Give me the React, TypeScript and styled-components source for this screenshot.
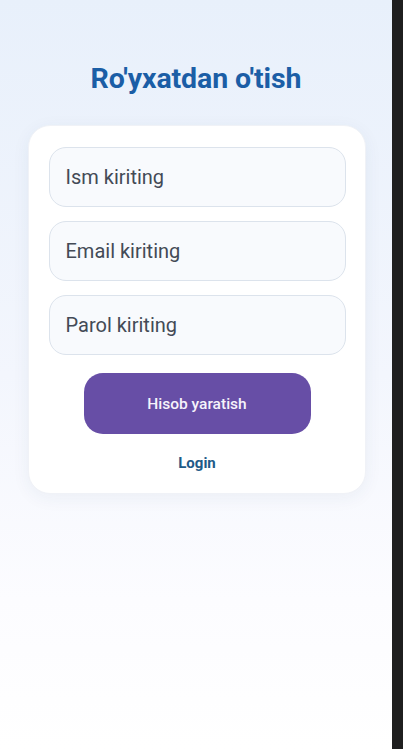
import React from "react";
import styled, { createGlobalStyle } from "styled-components";

const GlobalStyle = createGlobalStyle`
  html, body {
    margin: 0;
    padding: 0;
    height: 100%;
  }
  body {
    font-family: Roboto, "Liberation Sans", Arial, sans-serif;
    background: #ffffff;
  }
  #root {
    height: 100%;
  }
`;

const App = () => {
  return (
    <>
      <GlobalStyle />
      <Screen>
        <Page>
          <Title>Ro'yxatdan o'tish</Title>
          <Card>
            <Field placeholder="Ism kiriting" />
            <Field placeholder="Email kiriting" />
            <Field placeholder="Parol kiriting" type="password" />
            <SubmitButton type="button">Hisob yaratish</SubmitButton>
            <LoginLink href="#">Login</LoginLink>
          </Card>
        </Page>
        <SideStrip />
      </Screen>
    </>
  );
};

const Screen = styled.div`
  display: flex;
  width: 403px;
  height: 749px;
  overflow: hidden;
`;

const Page = styled.main`
  flex: 1;
  display: flex;
  flex-direction: column;
  align-items: center;
  padding-top: 62px;
  background: linear-gradient(180deg, #e8f0fb 0%, #f3f6fd 50%, #fcfcff 80%, #ffffff 100%);
`;

const SideStrip = styled.div`
  width: 11px;
  background: #1f1f1f;
`;

const Title = styled.h1`
  margin: 0 0 30px;
  font-size: 28.5px;
  line-height: 33px;
  font-weight: 700;
  color: #1b5ea6;
  letter-spacing: -0.1px;
`;

const Card = styled.section`
  box-sizing: border-box;
  width: 338px;
  margin-left: 2px;
  padding: 21px 20px 20px;
  display: flex;
  flex-direction: column;
  align-items: center;
  gap: 14px;
  background: #ffffff;
  border: 1px solid #f0f2f7;
  border-radius: 22px;
  box-shadow: 0 4px 18px rgba(40, 60, 110, 0.06);
`;

const Field = styled.input`
  box-sizing: border-box;
  width: 297px;
  height: 60px;
  padding: 0 16px;
  font-family: inherit;
  font-size: 20px;
  color: #3f4652;
  background: #f8fafd;
  border: 1px solid #dce3ec;
  border-radius: 17px;
  outline: none;

  &::placeholder {
    color: #434a56;
    opacity: 1;
  }
`;

const SubmitButton = styled.button`
  width: 227px;
  height: 61px;
  margin-top: 4px;
  border: none;
  border-radius: 19px;
  background: #674ea6;
  color: #f6f3fb;
  font-family: inherit;
  font-size: 15.5px;
  font-weight: 500;
  cursor: pointer;
`;

const LoginLink = styled.a`
  margin-top: 5px;
  font-size: 15px;
  line-height: 20px;
  font-weight: 700;
  color: #1e5a88;
  text-decoration: none;
`;

export default App;
